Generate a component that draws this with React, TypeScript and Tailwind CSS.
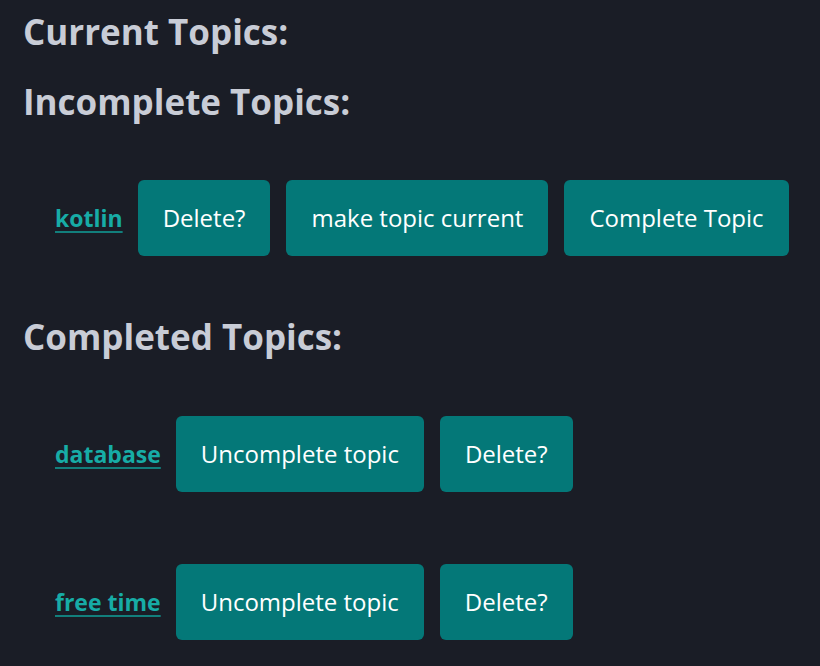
const FONT = "font-['Open_Sans','Noto_Sans',sans-serif]";

function TopicButton({ label }: { label: string }) {
  return (
    <button
      type="button"
      className="h-[76px] px-[25px] rounded-[6px] bg-[#047878] text-white text-[24px]"
    >
      {label}
    </button>
  );
}

function TopicRow({ name, actions }: { name: string; actions: string[] }) {
  return (
    <div className="flex items-center pl-[32px]">
      <a
        href="#"
        className="mr-[15px] text-[23px] font-bold text-[#17aca6] underline decoration-[#127f7c] decoration-2 underline-offset-4"
      >
        {name}
      </a>
      <div className="flex gap-[16px]">
        {actions.map((a) => (
          <TopicButton key={a} label={a} />
        ))}
      </div>
    </div>
  );
}

export default function App() {
  return (
    <div className={`min-h-screen bg-[#1a1d26] px-[23px] pt-[10px] ${FONT}`}>
      <h2 className="text-[35px] leading-[44px] font-bold text-[#c8ccd6]">
        Current Topics:
      </h2>
      <h2 className="mt-[26px] text-[35px] leading-[44px] font-bold text-[#c8ccd6]">
        Incomplete Topics:
      </h2>
      <div className="mt-[56px]">
        <TopicRow
          name="kotlin"
          actions={["Delete?", "make topic current", "Complete Topic"]}
        />
      </div>
      <h2 className="mt-[59px] text-[35px] leading-[44px] font-bold text-[#c8ccd6]">
        Completed Topics:
      </h2>
      <div className="mt-[57px] flex flex-col gap-[72px]">
        <TopicRow name="database" actions={["Uncomplete topic", "Delete?"]} />
        <TopicRow name="free time" actions={["Uncomplete topic", "Delete?"]} />
      </div>
    </div>
  );
}
